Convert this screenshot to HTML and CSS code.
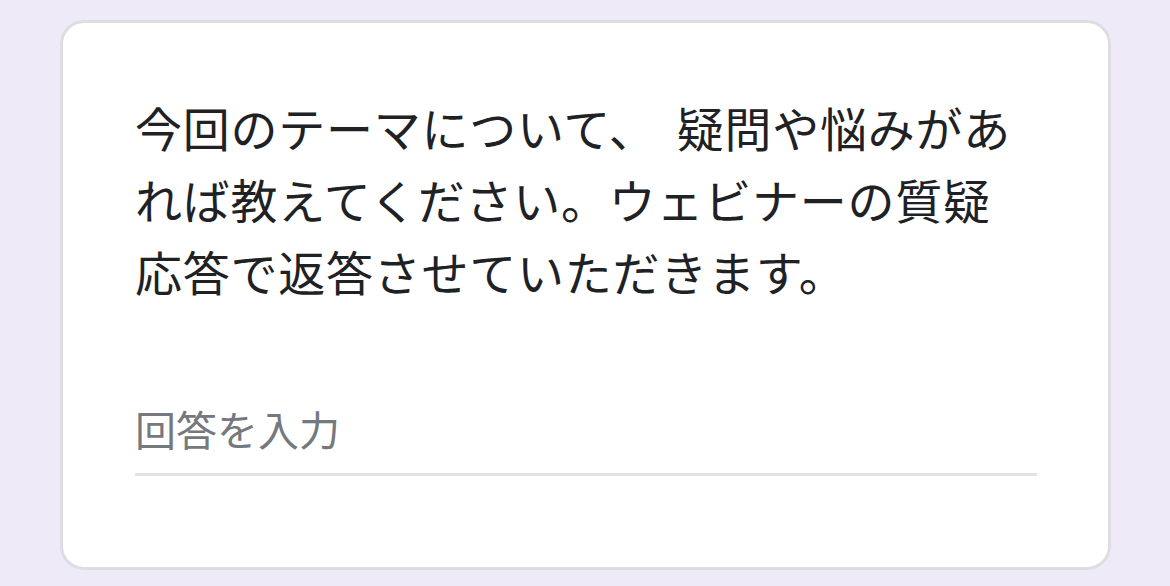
FILE: index.html
```html
<!DOCTYPE html>
<html lang="ja">
<head>
<meta charset="utf-8">
<title>質問</title>
<link rel="stylesheet" href="styles.css">
</head>
<body>
<div class="card">
  <p class="question">今回のテーマについて、 疑問や悩みがあれば教えてください。ウェビナーの質疑応答で返答させていただきます。</p>
  <input class="answer" type="text" placeholder="回答を入力">
</div>
</body>
</html>
```
FILE: styles.css
```css
html, body {
  margin: 0;
  padding: 0;
  background: #eeeaf8;
}
body {
  padding: 20px 0 0 60px;
  font-family: "Noto Sans CJK JP", "Noto Sans", sans-serif;
}
.card {
  box-sizing: border-box;
  width: 1051px;
  height: 550px;
  background: #ffffff;
  border: 3px solid #dedee2;
  border-radius: 24px;
  padding: 68px 72px 0 72px;
}
.question {
  margin: 0;
  max-width: 890px;
  font-size: 47px;
  line-height: 72px;
  letter-spacing: 0.75px;
  word-spacing: 9px;
  color: #202124;
}
.answer {
  display: block;
  box-sizing: border-box;
  width: 902px;
  height: 76px;
  margin-top: 93px;
  padding: 0 0 17px 0;
  border: none;
  border-bottom: 3px solid #e3e3e3;
  outline: none;
  background: transparent;
  font-family: "Noto Sans CJK JP", "Noto Sans", sans-serif;
  font-size: 41px;
  line-height: 56px;
  color: #202124;
}
.answer::placeholder {
  color: #75787c;
  opacity: 1;
}
```
